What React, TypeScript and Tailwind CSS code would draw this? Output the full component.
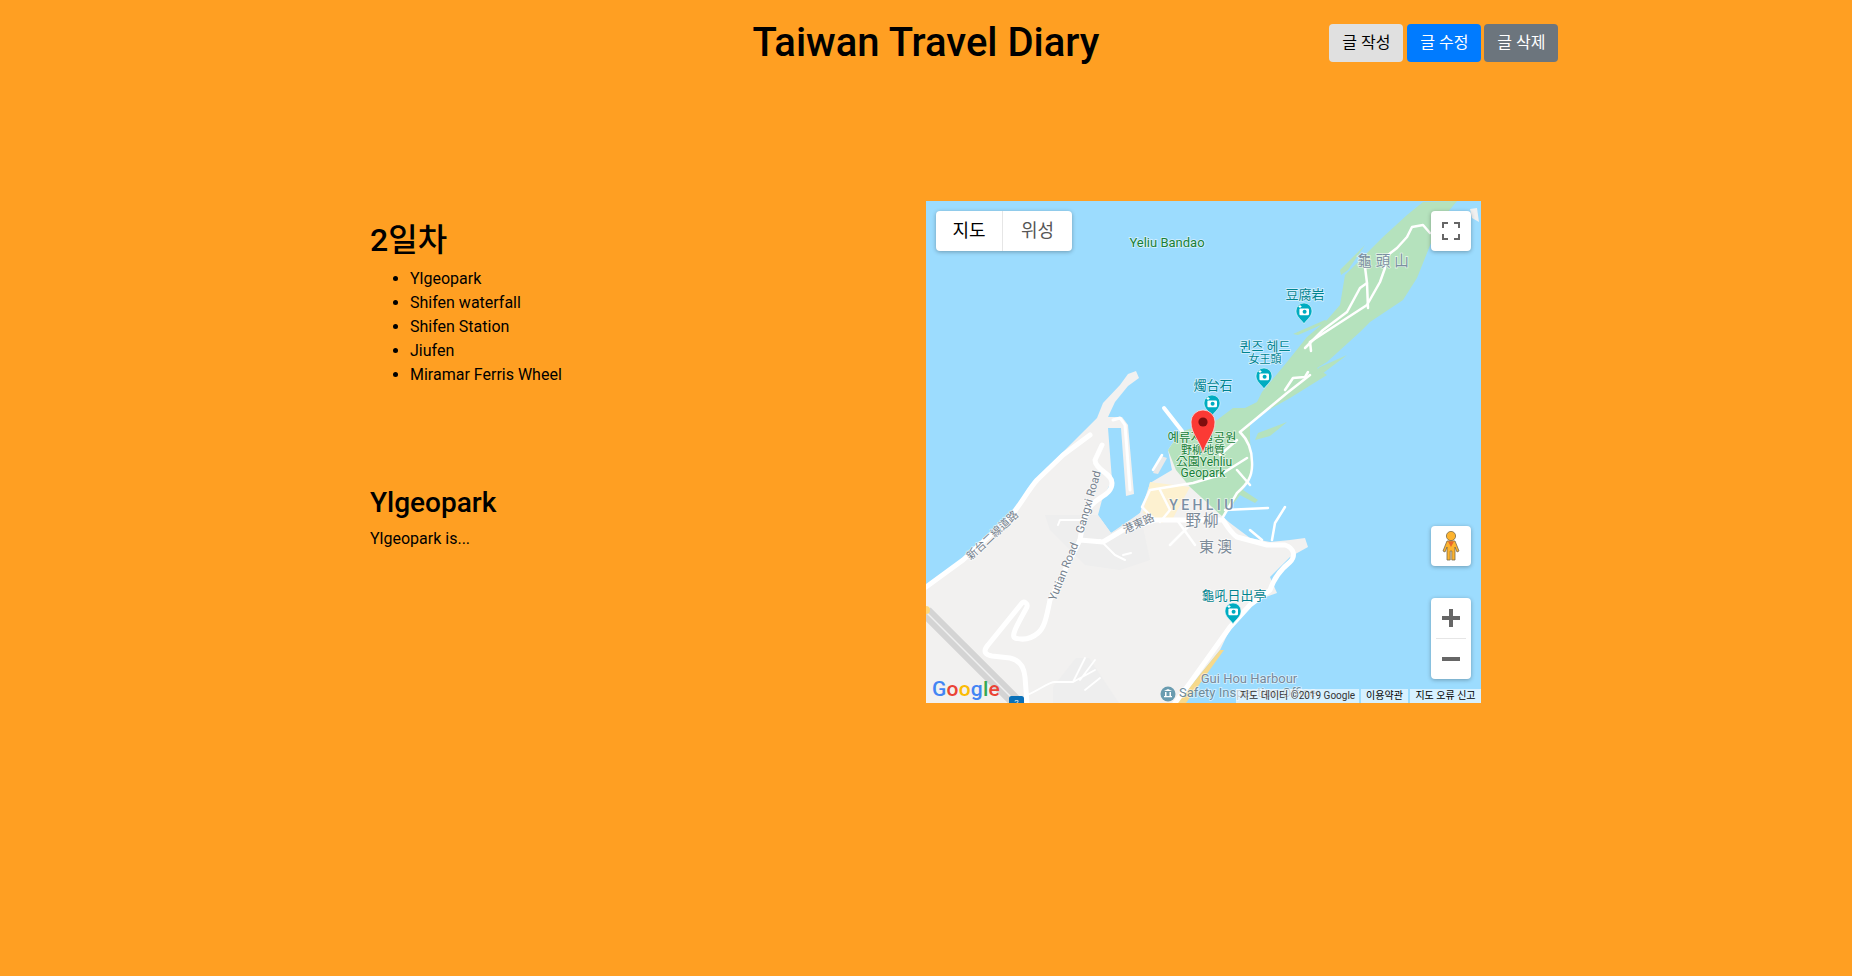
const GOOGLE = [
  ["G", "#4285F4"],
  ["o", "#EA4335"],
  ["o", "#FBBC05"],
  ["g", "#4285F4"],
  ["l", "#34A853"],
  ["e", "#EA4335"],
];

function PhotoPin({ x, y }: { x: number; y: number }) {
  return (
    <g transform={`translate(${x} ${y})`}>
      <path d="M0 12 C-2 8 -8 5 -8 -1 A8 8 0 0 1 8 -1 C8 5 2 8 0 12 Z" fill="#00acc1" stroke="#e8fbff" strokeWidth="0.6" />
      <rect x="-4.6" y="-3.6" width="9.6" height="6.8" rx="1.2" fill="#fff" />
      <circle cx="0.6" cy="-0.2" r="2" fill="#00acc1" />
      <path d="M-5.5 -5.5 h3 M-4 -7 v3" stroke="#fff" strokeWidth="1.1" />
    </g>
  );
}

function Label({
  x, y, size = 12, color = "#00838f", spacing = 0, weight = 400, rotate, anchor = "middle", children,
}: {
  x: number; y: number; size?: number; color?: string; spacing?: number; weight?: number; rotate?: number; anchor?: "middle" | "start"; children: string;
}) {
  return (
    <text
      x={x}
      y={y}
      fontSize={size}
      fill={color}
      letterSpacing={spacing}
      fontWeight={weight}
      textAnchor={anchor}
      stroke="#ffffff"
      strokeOpacity="0.6"
      strokeWidth="1.6"
      paintOrder="stroke"
      transform={rotate !== undefined ? `rotate(${rotate} ${x} ${y})` : undefined}
    >
      {children}
    </text>
  );
}

function MapDrawing() {
  const road = { fill: "none", stroke: "#ffffff", strokeLinejoin: "round" as const, strokeLinecap: "round" as const };
  return (
    <svg viewBox="926 201 555 502" className="block h-full w-full font-['Roboto','Noto_Sans_CJK_KR',sans-serif]">
      <rect x="926" y="201" width="555" height="502" fill="#9cdcfe" />

      {/* land */}
      <path
        fill="#f2f1f0"
        d="M926 587 L950 570 963 560 1013 513 1037 480 1063 452 1085 430 1097 418 1103 403 1120 385 1128 374 1136 371 1139 378 1128 386 1115 402 1108 417 L1108 428 1112 480 1102 500 1098 515 1111 533 1125 525 1140 513 1150 483 1172 470 1168 450 1180 432 L1223 430 1243 490 1223 517 1230 523 1250 538 1270 542 1290 540 1305 538 1308 547 1290 557 1270 577 1277 593 1250 603 1233 623 1220 650 1177 703 926 703 Z"
      />
      <path fill="#eeeeee" d="M1053 703 L1053 687 1076 658 1089 658 1119 703 Z" />
      <path fill="#eeeeee" d="M1045 515 L1098 515 1111 533 1140 513 1150 560 1120 570 1085 565 1050 530 Z" />
      <path fill="#f2f1f0" d="M1108 417 L1122 417 1128 425 1134 494 1126 496 1121 428 1108 428 Z" />
      <path fill="#e9e9e9" d="M1161 456 L1167 458 1158 474 1153 473 Z" />

      {/* park and peninsula */}
      <path
        fill="#b5e2bd"
        d="M1180 432 L1217 420 1233 408 1245 408 1257 402 1262 392 1287 362 1307 337 1327 320 1340 305 1345 275 1360 260 1383 237 1407 215 1423 202 1457 201 1443 218 1433 238 1417 278 1403 300 1370 322 1360 332 1327 362 1317 368 1327 375 1290 398 1260 415 1250 422 1250 440 1252 473 1243 490 1258 500 1255 503 1240 495 1223 517 1190 487 1176 470 1168 450 Z"
      />
      <path fill="#b5e2bd" d="M1255 440 L1258 433 1287 422 1270 436 Z" />
      <path fill="#b5e2bd" d="M1318 368 L1347 355 1322 374 Z" />
      <path fill="#b5e2bd" d="M1293 334 L1325 320 1328 322 1298 335 Z" />
      <path fill="#b5e2bd" d="M1340 270 L1365 245 1348 270 1341 275 Z" />
      <path fill="#f0f0f0" d="M1470 209 L1477 208 1479 222 1472 218 Z" />

      {/* town */}
      <path fill="#fdf1d0" d="M1150 482 L1190 487 1172 520 1160 523 1143 513 Z" />
      <path fill="#f6d98c" d="M1177 703 L1220 650 1224 650 1186 703 Z" />

      {/* highway */}
      <path d="M926 612 L1016 702" fill="none" stroke="#d4d4d4" strokeWidth="13" />
      <path d="M926 612 L1016 702" fill="none" stroke="#f0f0f0" strokeWidth="1.5" />
      <circle cx="926" cy="610" r="4" fill="#fdd67b" />

      {/* roads */}
      <g {...road} strokeWidth="5">
        <path d="M926 587 L963 560 1010 517 C1022 503 1028 490 1037 480 L1063 455 1090 435" />
        <path d="M1080 540 C1082 525 1085 515 1090 507 C1097 497 1112 495 1112 483 C1112 473 1095 470 1095 460 L1102 445" />
        <path d="M1080 540 L1050 600 C1046 620 1044 628 1038 633 C1030 640 1022 640 1015 638 C1010 636 1020 620 1027 607 C1028 603 1024 601 1022 603 L988 645 C982 652 986 655 992 656 L1010 658 C1020 660 1024 668 1025 677 L1027 703" />
        <path d="M1080 540 L1103 542 1123 530 1155 520 1223 520 C1228 528 1232 534 1237 537 L1267 545 1285 545 C1294 548 1296 556 1290 562 C1280 570 1274 578 1270 590 L1250 605 1230 627 1190 683 1175 703" />
        <path d="M1164 408 L1182 431" strokeWidth="4" />
      </g>
      <g {...road} strokeWidth="2.5">
        <path d="M1240 432 C1248 440 1252 450 1252 462 C1253 478 1246 485 1237 493 L1223 517" />
        <path d="M1247 458 L1220 475 1193 483 1150 490 1142 507 1155 520" />
        <path d="M1237 470 L1250 485 M1237 440 L1220 455 M1160 490 L1170 510 1160 522" />
        <path d="M1240 432 L1257 418 1287 393 1310 375" />
        <path d="M1285 390 L1293 378 1305 377 1308 372" />
        <path d="M1305 348 L1323 330 1347 312 1360 288 1367 283 1365 267" />
        <path d="M1310 342 L1367 305 1380 282 1385 268 1384 258 1397 248 1407 237 1412 227 1423 225 1430 233" />
        <path d="M1367 283 L1368 308 M1310 342 L1311 351" />
        <path d="M1225 510 L1268 508 M1285 507 L1275 523 1272 540 M1250 530 L1262 540" />
        <path d="M1113 420 L1120 418 1125 425 1130 490" strokeWidth="3" />
        <path d="M1153 470 L1162 455 M1177 520 L1195 545 M1195 520 L1170 545" />
        <path d="M1085 520 L1060 520 1058 525 M1100 540 L1115 555 1125 560 M1123 555 L1131 553" strokeWidth="2" />
      </g>
      <g {...road} strokeWidth="1.8">
        <path d="M1027 695 C1040 690 1048 682 1055 682 L1073 682 1095 670 M1073 682 L1085 658 M1080 680 L1095 660 M1085 690 L1100 678" />
      </g>

      <rect x="1009" y="696" width="15" height="10" rx="2.5" fill="#0a70b8" />
      <text x="1016.5" y="705" fontSize="8" fill="#fff" textAnchor="middle">2</text>

      {/* labels */}
      <Label x={1167} y={247} size={13} color="#188038">Yeliu Bandao</Label>
      <Label x={1385} y={266} size={14.5} color="#7b8fa1" spacing={4}>龜頭山</Label>
      <Label x={1305} y={299} size={13}>豆腐岩</Label>
      <Label x={1265} y={351} size={13}>퀸즈 헤드</Label>
      <Label x={1265} y={363} size={11}>女王頭</Label>
      <Label x={1213} y={390} size={13}>燭台石</Label>
      <PhotoPin x={1304} y={312} />
      <PhotoPin x={1264} y={377} />
      <PhotoPin x={1212} y={404} />
      <PhotoPin x={1233} y={612} />
      <Label x={1202} y={442} size={12.5} color="#188038">예류지질공원</Label>
      <Label x={1203} y={454} size={11} color="#188038">野柳地質</Label>
      <Label x={1204} y={466} size={12} color="#188038">公園Yehliu</Label>
      <Label x={1203} y={477} size={12} color="#188038">Geopark</Label>
      <Label x={1203} y={510} size={14} weight={500} color="#7b8fa5" spacing={3.4}>YEHLIU</Label>
      <Label x={1203} y={526} size={15.5} color="#7d8b99" spacing={2}>野柳</Label>
      <Label x={1217} y={552} size={15} color="#7d8b99" spacing={3}>東澳</Label>
      <Label x={1140} y={527} size={11} color="#77838f" rotate={-24}>港東路</Label>
      <Label x={1092} y={503} size={11.5} color="#77838f" rotate={-74}>Gangxi Road</Label>
      <Label x={1067} y={573} size={11.5} color="#77838f" rotate={-68}>Yutian Road</Label>
      <Label x={995} y={538} size={11} color="#77838f" rotate={-43}>新台二線道路</Label>
      <Label x={1234} y={600} size={13}>龜吼日出亭</Label>
      <Label x={1249} y={683} size={13} color="#76889a">Gui Hou Harbour</Label>
      <circle cx="1168" cy="694" r="7.5" fill="#6a9cb0" />
      <path d="M1164 691 h8 l-4 -2 Z M1164 696 h8 v1.2 h-8 Z M1165 692 h1.5 v4 h-1.5 Z M1169.5 692 h1.5 v4 h-1.5 Z" fill="#fff" />
      <Label x={1179} y={697} size={13} color="#6d8a99" anchor="start">Safety Inspection Office</Label>

      {/* marker */}
      <path d="M1203 453 C1200 441 1191 434 1191 422 A12 12 0 0 1 1215 422 C1215 434 1206 441 1203 453 Z" fill="#fb3a35" stroke="#f8e0df" strokeWidth="0.8" />
      <circle cx="1203" cy="422" r="4.6" fill="#7e0e0e" />
    </svg>
  );
}

function MapControlBox({ className, children }: { className: string; children: React.ReactNode }) {
  return (
    <div className={`absolute flex items-center justify-center rounded-sm bg-white shadow-[0_1px_4px_rgba(0,0,0,0.3)] ${className}`}>
      {children}
    </div>
  );
}

function MapView() {
  return (
    <div className="relative h-[502px] w-[555px] overflow-hidden">
      <MapDrawing />

      <div className="absolute left-[10px] top-[10px] flex h-10 w-[136px] rounded-sm bg-white text-[18px] shadow-[0_1px_4px_rgba(0,0,0,0.3)]">
        <div className="flex w-[67px] items-center justify-center border-r border-[#e6e6e6] text-black">지도</div>
        <div className="flex flex-1 items-center justify-center text-[#565656]">위성</div>
      </div>

      <MapControlBox className="right-[10px] top-[10px] h-10 w-10">
        <svg width="18" height="18" viewBox="0 0 18 18" fill="none" stroke="#666" strokeWidth="2">
          <path d="M1 6 V1 H6 M12 1 H17 V6 M17 12 V17 H12 M6 17 H1 V12" />
        </svg>
      </MapControlBox>

      <MapControlBox className="right-[10px] top-[325px] h-10 w-10">
        <svg width="18" height="30" viewBox="0 0 18 30">
          <circle cx="9" cy="5" r="4.6" fill="#fdb32e" stroke="#7a6a4a" strokeWidth="0.8" />
          <path d="M5 10 H13 L17 20 15 21 13 16 V29 H9.8 V20 H8.2 V29 H5 V16 L3 21 1 20 Z" fill="#fdb32e" stroke="#7a6a4a" strokeWidth="0.8" strokeLinejoin="round" />
          <path d="M6 10.5 H12 L9 16 Z" fill="#e8662c" />
        </svg>
      </MapControlBox>

      <div className="absolute right-[10px] top-[397px] flex h-[81px] w-10 flex-col items-center rounded-sm bg-white shadow-[0_1px_4px_rgba(0,0,0,0.3)]">
        <div className="flex h-10 w-full items-center justify-center">
          <svg width="18" height="18" viewBox="0 0 18 18" fill="#666">
            <path d="M7 0 H11 V7 H18 V11 H11 V18 H7 V11 H0 V7 H7 Z" />
          </svg>
        </div>
        <div className="h-px w-[30px] bg-[#e6e6e6]" />
        <div className="flex h-10 w-full items-center justify-center">
          <svg width="18" height="18" viewBox="0 0 18 18" fill="#666">
            <rect x="0" y="7" width="18" height="4" />
          </svg>
        </div>
      </div>

      <div className="absolute bottom-[2px] left-[6px] flex font-['Roboto',sans-serif] text-[21px] font-medium leading-[24px] tracking-[0.2px]">
        {GOOGLE.map(([c, col], i) => (
          <span key={i} style={{ color: col }}>{c}</span>
        ))}
      </div>

      <div className="absolute bottom-0 right-0 flex h-[14px] items-center gap-[2px] text-[10px] leading-[14px] text-[#333]">
        <div className="w-[123px] bg-white/60 text-center">지도 데이터 ©2019 Google</div>
        <div className="w-[47px] bg-white/60 text-center text-black">이용약관</div>
        <div className="w-[71px] bg-white/60 text-center text-black">지도 오류 신고</div>
      </div>
    </div>
  );
}

export default function App() {
  return (
    <div className="min-h-[976px] bg-[#ff9f22] font-['Roboto','Noto_Sans_CJK_KR',sans-serif] text-[16px] leading-6 text-black">
      <header className="grid h-[72px] grid-cols-[1fr_auto_1fr] items-start">
        <div />
        <h1 className="pt-[19px] text-[40px] font-medium leading-[48px]">Taiwan Travel Diary</h1>
        <div className="flex pl-[230px] pt-6">
          <button className="h-[38px] w-[74px] rounded bg-[#e0e0e0] text-black">글 작성</button>
          <button className="ml-1 h-[38px] w-[74px] rounded bg-[#007bff] text-white">글 수정</button>
          <button className="ml-[3px] h-[38px] w-[74px] rounded bg-[#6c757d] text-white">글 삭제</button>
        </div>
      </header>

      <main className="ml-[370px] mt-[129px] grid w-[1111px] grid-cols-[556px_555px]">
        <section className="pt-5">
          <h2 className="text-[32px] font-medium leading-[38px]">2일차</h2>
          <ul className="mt-2 list-disc pl-10">
            <li>Ylgeopark</li>
            <li>Shifen waterfall</li>
            <li>Shifen Station</li>
            <li>Jiufen</li>
            <li>Miramar Ferris Wheel</li>
          </ul>
          <h3 className="mt-[99px] text-[28px] font-medium leading-[34px]">Ylgeopark</h3>
          <p className="mt-[7px]">Ylgeopark is...</p>
        </section>
        <MapView />
      </main>
    </div>
  );
}
